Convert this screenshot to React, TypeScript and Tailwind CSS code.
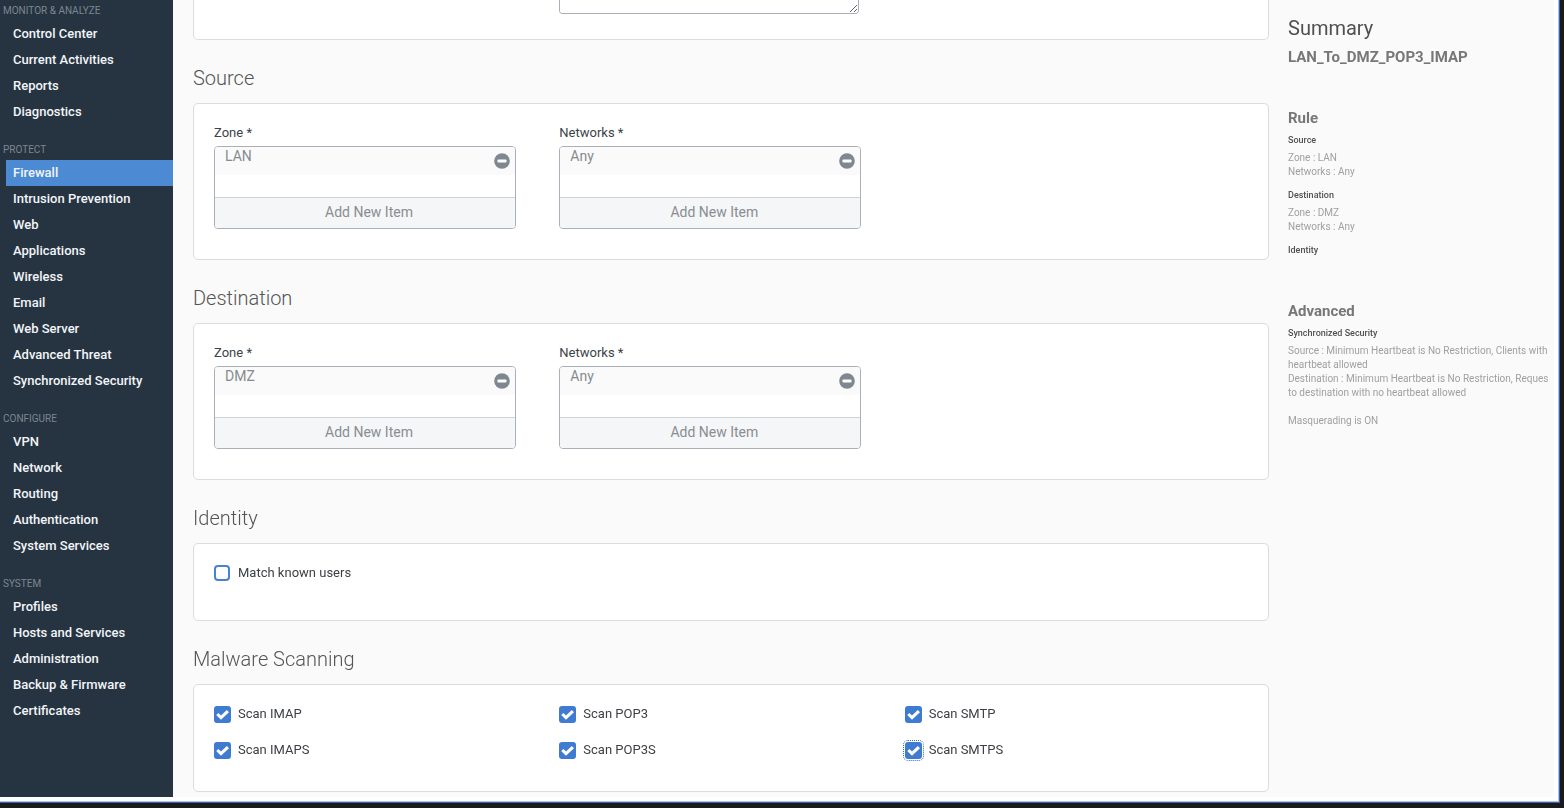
import React, { useState } from "react";

interface NavSection {
  title: string;
  items: string[];
}

interface ScanOption {
  id: string;
  label: string;
}

const NAV_SECTIONS: NavSection[] = [
  {
    title: "MONITOR & ANALYZE",
    items: ["Control Center", "Current Activities", "Reports", "Diagnostics"],
  },
  {
    title: "PROTECT",
    items: [
      "Firewall",
      "Intrusion Prevention",
      "Web",
      "Applications",
      "Wireless",
      "Email",
      "Web Server",
      "Advanced Threat",
      "Synchronized Security",
    ],
  },
  {
    title: "CONFIGURE",
    items: ["VPN", "Network", "Routing", "Authentication", "System Services"],
  },
  {
    title: "SYSTEM",
    items: [
      "Profiles",
      "Hosts and Services",
      "Administration",
      "Backup & Firmware",
      "Certificates",
    ],
  },
];

const SCAN_OPTIONS: ScanOption[] = [
  { id: "imap", label: "Scan IMAP" },
  { id: "pop3", label: "Scan POP3" },
  { id: "smtp", label: "Scan SMTP" },
  { id: "imaps", label: "Scan IMAPS" },
  { id: "pop3s", label: "Scan POP3S" },
  { id: "smtps", label: "Scan SMTPS" },
];

function Sidebar() {
  const [active, setActive] = useState("Firewall");

  return (
    <nav className="w-[173px] shrink-0 bg-[#263442] pt-px" aria-label="Main">
      {NAV_SECTIONS.map((section) => (
        <div key={section.title} className="mb-[15px]">
          <h2 className="pl-[3px] text-[10px] leading-5 text-[#7d868e]">
            {section.title}
          </h2>
          <ul>
            {section.items.map((item) => (
              <li key={item}>
                <a
                  href="#"
                  onClick={() => setActive(item)}
                  className={`ml-1.5 block pl-[7px] text-[13px] leading-[26px] font-medium whitespace-nowrap text-[#f2f5f7] ${
                    item === active ? "bg-[#4c8ad4]" : ""
                  }`}
                >
                  {item}
                </a>
              </li>
            ))}
          </ul>
        </div>
      ))}
    </nav>
  );
}

function Section({
  title,
  children,
}: {
  title: string;
  children: React.ReactNode;
}) {
  return (
    <section>
      <h2 className="pt-6 pb-[11px] text-xl leading-7 font-light text-[#555]">
        {title}
      </h2>
      <div className="rounded-[5px] border border-[#dadcde] bg-white pr-[18px] pl-5">
        {children}
      </div>
    </section>
  );
}

function ItemPicker({
  id,
  label,
  initial,
}: {
  id: string;
  label: string;
  initial: string[];
}) {
  const [items, setItems] = useState(initial);

  return (
    <div role="group" aria-labelledby={id}>
      <span
        id={id}
        className="mb-[3px] block text-[13px] leading-5 text-[#3c4248]"
      >
        {label} *
      </span>
      <div className="max-w-[302px] overflow-hidden rounded border border-[#aab0b7] bg-white">
        <ul className="h-[50px]">
          {items.map((item) => (
            <li
              key={item}
              className="flex h-7 items-center justify-between bg-[#fafafa] pr-[5px] pb-px pl-2.5"
            >
              <span className="self-start text-sm leading-[18px] text-[#868b91]">
                {item}
              </span>
              <button
                type="button"
                aria-label={`Remove ${item}`}
                onClick={() => setItems(items.filter((i) => i !== item))}
              >
                <svg className="size-4" viewBox="0 0 16 16">
                  <circle cx="8" cy="8" r="7.8" fill="#7f8791" />
                  <rect x="3.5" y="6.5" width="9" height="3" rx="0.8" fill="#fff" />
                </svg>
              </button>
            </li>
          ))}
        </ul>
        <button
          type="button"
          className="block w-full border-t border-[#cfd3d7] bg-[#f4f6f8] pb-0.5 pl-2 text-center text-sm leading-7 text-[#8a8d91]"
        >
          Add New Item
        </button>
      </div>
    </div>
  );
}

function Checkbox({
  id,
  label,
  defaultChecked = false,
  outlined = false,
}: {
  id: string;
  label: string;
  defaultChecked?: boolean;
  outlined?: boolean;
}) {
  return (
    <div className="flex items-start">
      <span className="relative flex w-6 items-center">
        <input
          id={id}
          type="checkbox"
          defaultChecked={defaultChecked}
          className={`peer size-4 appearance-none rounded border-2 border-[#4a82d2] bg-white checked:size-[17px] checked:rounded-[3px] checked:border-[#3f7bd0] checked:bg-[#3f7bd0] ${
            outlined ? "outline-1 outline-offset-1 outline-[#2f6cc4] outline-dotted" : ""
          }`}
        />
        <svg
          className="pointer-events-none absolute top-0 left-0 hidden size-[17px] peer-checked:block"
          viewBox="0 0 17 17"
          fill="none"
          stroke="#fff"
          strokeWidth="3.1"
        >
          <path d="M3.3 8 L7 11.6 L13.9 5.1" />
        </svg>
      </span>
      <label htmlFor={id} className="text-[13px] leading-[15px] text-[#3c3f43]">
        {label}
      </label>
    </div>
  );
}

function Summary() {
  return (
    <aside className="w-[266px] shrink-0 overflow-hidden pt-3.5 text-[10px] leading-[14px] whitespace-nowrap text-[#a0a0a0]">
      <h2 className="text-xl leading-7 text-[#505050]">Summary</h2>
      <p className="mt-[5px] text-[15px] leading-5 font-bold text-[#777]">
        LAN_To_DMZ_POP3_IMAP
      </p>

      <h3 className="mt-[41px] text-[15px] leading-5 font-bold text-[#777]">
        Rule
      </h3>
      <h4 className="mt-[5px] text-[9px] font-medium text-[#505050]">Source</h4>
      <p className="mt-1">Zone : LAN</p>
      <p>Networks : Any</p>
      <h4 className="mt-[9px] text-[9px] font-medium text-[#505050]">
        Destination
      </h4>
      <p className="mt-1">Zone : DMZ</p>
      <p>Networks : Any</p>
      <h4 className="mt-[9px] text-[9px] font-medium text-[#505050]">
        Identity
      </h4>

      <h3 className="mt-11 text-[15px] leading-5 font-bold text-[#777]">
        Advanced
      </h3>
      <h4 className="mt-[5px] text-[9px] font-medium text-[#505050]">
        Synchronized Security
      </h4>
      <p className="mt-1">
        Source : Minimum Heartbeat is No Restriction, Clients with
        <br />
        heartbeat allowed
      </p>
      <p>
        Destination : Minimum Heartbeat is No Restriction, Reques
        <br />
        to destination with no heartbeat allowed
      </p>
      <p className="mt-3.5">Masquerading is ON</p>
    </aside>
  );
}

export default function App() {
  return (
    <div className="min-h-screen bg-[#1a1a1d] pr-1 pb-[5px] font-['Roboto',sans-serif]">
      <div className="border-r border-b border-[#3d5ea5] bg-white pr-[5px] pb-[5px] shadow-[inset_-1px_-1px_0_#a9c4ee]">
        <div className="flex bg-[#fafafa]">
          <Sidebar />
          <main className="min-w-0 flex-1 pr-[19px] pb-[5px] pl-5">
            <div className="grid grid-cols-3 rounded-b-[5px] border border-t-0 border-[#dadcde] bg-white pr-[18px] pb-[25px] pl-5">
              <textarea
                aria-label="Description"
                className="col-start-2 block h-3.5 w-[300px] resize rounded-b border border-t-0 border-[#aab0b7] bg-white"
              />
            </div>

            <Section title="Source">
              <div className="grid grid-cols-3 pt-[19px] pb-[30px]">
                <ItemPicker id="source-zone" label="Zone" initial={["LAN"]} />
                <ItemPicker id="source-networks" label="Networks" initial={["Any"]} />
              </div>
            </Section>

            <Section title="Destination">
              <div className="grid grid-cols-3 pt-[19px] pb-[30px]">
                <ItemPicker id="dest-zone" label="Zone" initial={["DMZ"]} />
                <ItemPicker id="dest-networks" label="Networks" initial={["Any"]} />
              </div>
            </Section>

            <Section title="Identity">
              <div className="pt-[21px] pb-[39px]">
                <Checkbox id="known-users" label="Match known users" />
              </div>
            </Section>

            <Section title="Malware Scanning">
              <div className="grid grid-cols-3 gap-y-[19px] pt-[21px] pb-8">
                {SCAN_OPTIONS.map((option) => (
                  <Checkbox
                    key={option.id}
                    id={option.id}
                    label={option.label}
                    defaultChecked
                    outlined={option.id === "smtps"}
                  />
                ))}
              </div>
            </Section>
          </main>
          <Summary />
        </div>
      </div>
    </div>
  );
}
